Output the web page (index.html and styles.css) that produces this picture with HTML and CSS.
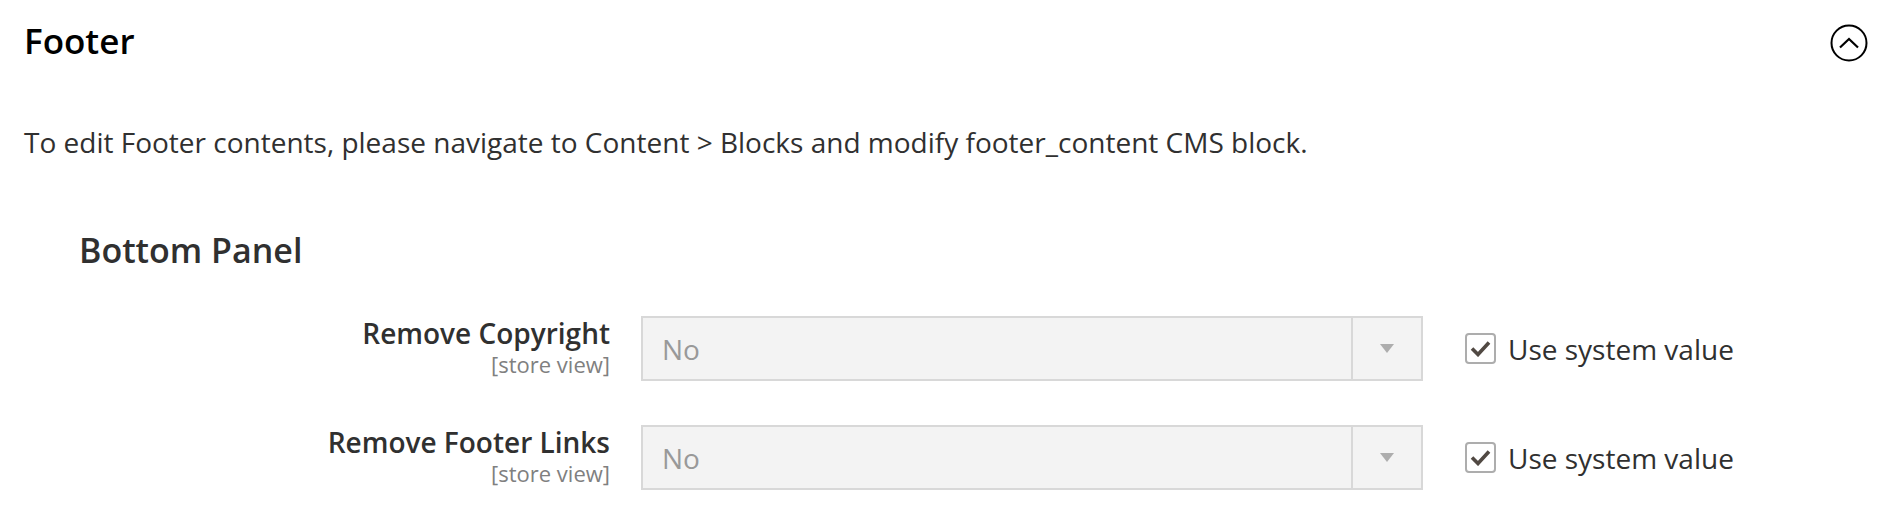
FILE: index.html
```html
<!DOCTYPE html>
<html lang="en">
<head>
<meta charset="utf-8">
<title>Footer</title>
<link rel="stylesheet" href="styles.css">
</head>
<body>
<div class="section">
  <div class="section-head">
    <h2 class="section-title">Footer</h2>
    <button class="collapse-btn" aria-label="Collapse">
      <svg width="38" height="38" viewBox="0 0 38 38"><circle cx="19" cy="19" r="17.5" fill="none" stroke="#000" stroke-width="2"/><path d="M10 23.5 L19 15 L28 23.5" fill="none" stroke="#000" stroke-width="2.2"/></svg>
    </button>
  </div>
  <p class="comment">To edit Footer contents, please navigate to Content &gt; Blocks and modify footer_content CMS block.</p>
  <div class="group">
    <h3 class="group-title">Bottom Panel</h3>
    <div class="field">
      <div class="label"><span class="label-text">Remove Copyright</span><span class="scope">[store view]</span></div>
      <div class="select"><span class="select-value">No</span><span class="select-arrow"><span class="tri"></span></span></div>
      <label class="inherit"><span class="cb"><svg width="21" height="17" viewBox="0 0 21 17"><path d="M2 8.5 L8 14.5 L19 2.5" fill="none" stroke="#514943" stroke-width="3.6"/></svg></span><span class="inherit-text">Use system value</span></label>
    </div>
    <div class="field">
      <div class="label"><span class="label-text">Remove Footer Links</span><span class="scope">[store view]</span></div>
      <div class="select"><span class="select-value">No</span><span class="select-arrow"><span class="tri"></span></span></div>
      <label class="inherit"><span class="cb"><svg width="21" height="17" viewBox="0 0 21 17"><path d="M2 8.5 L8 14.5 L19 2.5" fill="none" stroke="#514943" stroke-width="3.6"/></svg></span><span class="inherit-text">Use system value</span></label>
    </div>
  </div>
</div>
</body>
</html>
```
FILE: styles.css
```css
html, body {
  margin: 0;
  padding: 0;
  background: #fff;
}
body {
  font-family: "Open Sans", "Liberation Sans", sans-serif;
  color: #303030;
}
.section {
  padding: 0 21px 0 24px;
}
.section-head {
  display: flex;
  align-items: flex-start;
  justify-content: space-between;
  height: 86px;
}
.section-title {
  margin: 21px 0 0;
  font-size: 35px;
  font-weight: 600;
  color: #000;
  line-height: 40px;
}
.collapse-btn {
  border: 0;
  background: none;
  padding: 0;
  margin-top: 24px;
  width: 38px;
  height: 38px;
  display: block;
}
.collapse-btn svg { display: block; }
.comment {
  margin: 37px 0 0;
  font-size: 28px;
  line-height: 38px;
  color: #303030;
}
.group {
  margin: 0;
  padding: 0;
}
.group-title {
  margin: 69px 0 0;
  padding-left: 55px;
  font-size: 34px;
  font-weight: 600;
  color: #303030;
  line-height: 40px;
}
.field {
  display: flex;
  align-items: flex-start;
  margin-top: 46px;
}
.field + .field { margin-top: 44px; }
.label {
  width: 586px;
  flex: none;
  display: flex;
  flex-direction: column;
  align-items: flex-end;
  margin-right: 31px;
  margin-top: -1px;
}
.label-text {
  font-size: 28px;
  font-weight: 600;
  line-height: 36px;
  color: #303030;
}
.scope {
  font-size: 22px;
  line-height: 26px;
  color: #808080;
}
.select {
  width: 782px;
  height: 65px;
  box-sizing: border-box;
  border: 2px solid #d8d8d8;
  background: #f3f3f3;
  display: flex;
  align-items: center;
  flex: none;
}
.select-value {
  flex: 1;
  padding-left: 19px;
  font-size: 28px;
  color: #999;
}
.select-arrow {
  width: 68px;
  align-self: stretch;
  border-left: 2px solid #d8d8d8;
  display: flex;
  align-items: center;
  justify-content: center;
}
.tri {
  width: 0;
  height: 0;
  border-left: 7px solid transparent;
  border-right: 7px solid transparent;
  border-top: 9px solid #adadad;
}
.inherit {
  display: flex;
  align-items: center;
  margin-left: 42px;
  height: 65px;
}
.cb {
  width: 31px;
  height: 31px;
  box-sizing: border-box;
  border: 2px solid #adadad;
  border-radius: 4px;
  display: flex;
  align-items: center;
  justify-content: center;
  margin-right: 12px;
}
.cb svg { display: block; }
.inherit-text {
  font-size: 28px;
  color: #303030;
}
```
